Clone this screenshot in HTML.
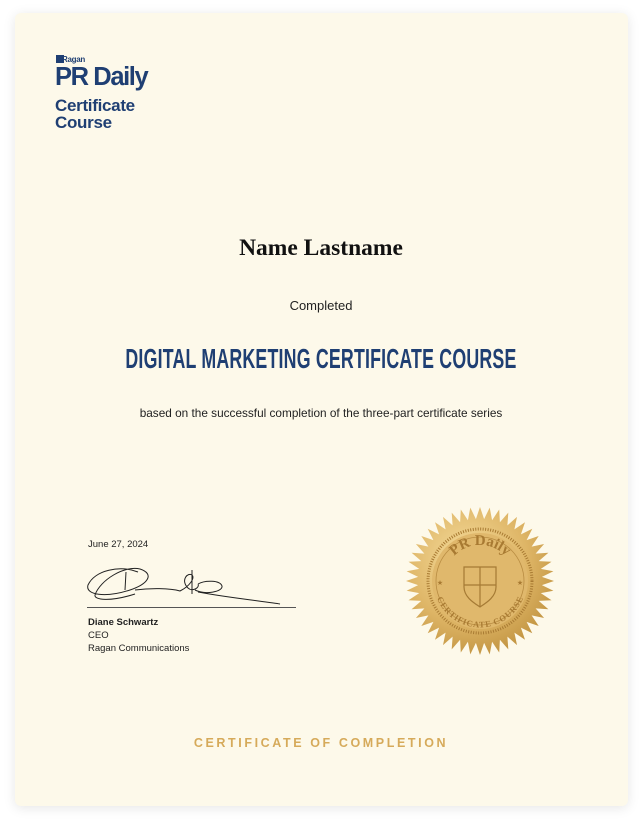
<!DOCTYPE html>
<html><head><meta charset="utf-8"><style>
html,body{margin:0;padding:0;background:#fff;width:642px;height:820px;overflow:hidden;font-family:"Liberation Sans",sans-serif}
.card{position:absolute;left:15px;top:13px;width:613px;height:793px;background:#fdf9ea;border-radius:6px;box-shadow:0 2px 12px rgba(0,0,0,0.10)}
.abs{position:absolute;white-space:nowrap}
.blue{color:#1f3f73}
</style></head><body>
<div class="card"></div>
<div class="abs blue" style="left:56px;top:55px;width:8px;height:8px;background:#1f3f73"></div>
<div class="abs blue" style="left:62px;top:55px;font-size:8px;font-weight:bold;letter-spacing:-0.3px">Ragan</div>
<div class="abs blue" style="left:55px;top:63px;font-size:25.5px;font-weight:bold;letter-spacing:-1.4px;line-height:28px">PR Daily</div>
<div class="abs blue" style="left:55px;top:97px;font-size:17px;font-weight:bold;line-height:17px;letter-spacing:-0.3px">Certificate<br>Course</div>

<div class="abs" style="left:0;width:642px;text-align:center;top:235px;font-family:'Liberation Serif',serif;font-size:23.5px;font-weight:bold;color:#111">Name Lastname</div>
<div class="abs" style="left:0;width:642px;text-align:center;top:298px;font-size:13px;color:#222">Completed</div>
<div class="abs blue" style="left:0;width:642px;text-align:center;top:343px;"><span style="display:inline-block;font-size:28px;font-weight:bold;transform:scaleX(0.635);letter-spacing:0.3px">DIGITAL MARKETING CERTIFICATE COURSE</span></div>
<div class="abs" style="left:0;width:642px;text-align:center;top:406px;font-size:11.8px;color:#222">based on the successful completion of the three-part certificate series</div>

<div class="abs" style="left:88px;top:539px;font-size:9.5px;color:#222">June 27, 2024</div>
<svg class="abs" style="left:80px;top:560px" width="220" height="50" viewBox="0 0 220 50">
<path d="M46 12 L45 30 M58 12 C40 5 15 10 8 25 C5 35 25 38 50 30 C68 24 75 14 60 9 C45 5 20 20 15 35 C14 40 30 42 55 34 M55 30 C70 28 90 28 100 31 C110 26 115 18 112 15 C108 12 100 20 108 28 C112 32 120 28 118 24 M112 10 L112 34 M118 24 C125 20 140 20 142 26 C143 32 125 35 115 30 M118 32 C150 38 190 42 200 44" fill="none" stroke="#222" stroke-width="1"/>
</svg>
<div class="abs" style="left:87px;top:607px;width:209px;height:1px;background:#555"></div>
<div class="abs" style="left:88px;top:616px;font-size:9.5px;font-weight:bold;color:#222;line-height:13px">Diane Schwartz</div>
<div class="abs" style="left:88px;top:629px;font-size:9.5px;color:#222;line-height:13px">CEO<br>Ragan Communications</div>

<svg class="abs" style="left:404px;top:505px" width="152" height="152" viewBox="-76 -76 152 152">
<defs><radialGradient id="g" cx="40%" cy="35%" r="70%"><stop offset="0" stop-color="#f5dc9c"/><stop offset="0.6" stop-color="#deb566"/><stop offset="1" stop-color="#c0923f"/></radialGradient>
<path id="top" d="M-36 0 A36 36 0 0 1 36 0"/><path id="bot" d="M-40 0 A40 40 0 0 0 40 0"/></defs>
<polygon id="star" fill="url(#g)" points=""/>
<circle r="52" fill="none" stroke="#a87a32" stroke-width="3" stroke-dasharray="1 1.5"/>
<circle r="48" fill="#e0b86c"/>
<circle r="44" fill="none" stroke="#b88c42" stroke-width="0.8"/>
<path d="M-16 -14 L16 -14 L16 6 C16 16 6 22 0 26 C-6 22 -16 16 -16 6 Z M0 -14 L0 26 M-16 4 L16 4" fill="none" stroke="#a57a34" stroke-width="1.2"/>
<text font-family="Liberation Serif,serif" font-size="15" font-weight="bold" fill="#a87a32"><textPath href="#top" startOffset="50%" text-anchor="middle">PR Daily</textPath></text>
<text font-family="Liberation Serif,serif" font-size="8.5" font-weight="bold" fill="#a87a32"><textPath href="#bot" startOffset="50%" text-anchor="middle" dominant-baseline="hanging">CERTIFICATE COURSE</textPath></text>
<text x="-40" y="4" font-size="7" fill="#a87a32" text-anchor="middle">★</text>
<text x="40" y="4" font-size="7" fill="#a87a32" text-anchor="middle">★</text>
</svg>
<script>
(function(){var p=[],n=48;for(var i=0;i<n*2;i++){var r=i%2?62:74,a=i*Math.PI/n-Math.PI/2;p.push((r*Math.cos(a)).toFixed(1)+","+(r*Math.sin(a)).toFixed(1));}document.getElementById("star").setAttribute("points",p.join(" "));})();
</script>

<div class="abs" style="left:0;width:642px;text-align:center;top:736px;font-size:12.5px;font-weight:bold;letter-spacing:2.6px;color:#d6aa5a">CERTIFICATE OF COMPLETION</div>
</body></html>
